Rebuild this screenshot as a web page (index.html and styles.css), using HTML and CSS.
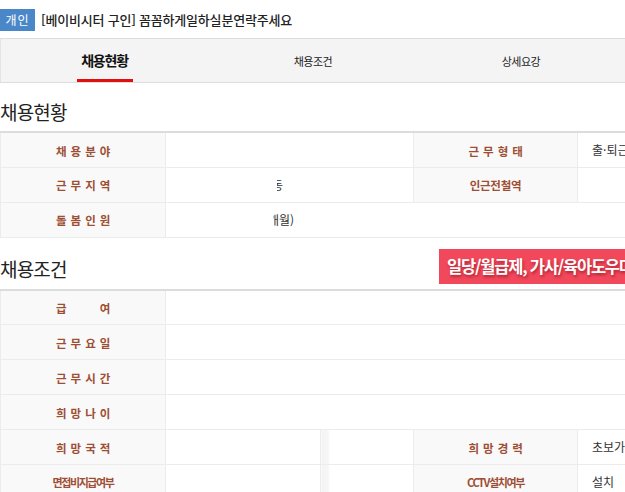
FILE: index.html
```html
<!DOCTYPE html>
<html lang="ko">
<head>
<meta charset="utf-8">
<link rel="stylesheet" href="styles.css">
</head>
<body>
<div class="page">
  <div class="title-row">
    <span class="badge">개인</span>
    <h1 class="title">[베이비시터 구인] 꼼꼼하게일하실분연락주세요</h1>
  </div>
  <nav class="tabs">
    <a class="tab active"><span>채용현황</span></a>
    <a class="tab"><span>채용조건</span></a>
    <a class="tab"><span>상세요강</span></a>
  </nav>

  <h2 class="sec-title">채용현황</h2>
  <table class="info">
    <colgroup><col class="c1"><col class="c2"><col class="c3"><col class="c4"><col class="c5"></colgroup>
    <tr>
      <th><span class="j">채 용 분 야</span></th>
      <td colspan="2"></td>
      <th><span class="j">근 무 형 태</span></th>
      <td>출·퇴근</td>
    </tr>
    <tr>
      <th><span class="j">근 무 지 역</span></th>
      <td colspan="2" class="pad-a"><span class="clip clip-a"><span>동</span></span></td>
      <th>인근전철역</th>
      <td></td>
    </tr>
    <tr>
      <th><span class="j">돌 봄 인 원</span></th>
      <td colspan="4" class="pad-b"><span class="clip clip-b"><span>개월)</span></span></td>
    </tr>
  </table>

  <div class="sec-head">
    <h2 class="sec-title">채용조건</h2>
    <div class="banner">일당/월급제, 가사/육아도우미</div>
  </div>
  <table class="info">
    <colgroup><col class="c1"><col class="c2"><col class="c3"><col class="c4"><col class="c5"></colgroup>
    <tr>
      <th><span class="j">급 여</span></th>
      <td colspan="4"></td>
    </tr>
    <tr>
      <th><span class="j">근 무 요 일</span></th>
      <td colspan="4"></td>
    </tr>
    <tr>
      <th><span class="j">근 무 시 간</span></th>
      <td colspan="4"></td>
    </tr>
    <tr>
      <th><span class="j">희 망 나 이</span></th>
      <td colspan="4"></td>
    </tr>
    <tr>
      <th><span class="j">희 망 국 적</span></th>
      <td></td>
      <td class="shade"></td>
      <th><span class="j">희 망 경 력</span></th>
      <td>초보가능</td>
    </tr>
    <tr>
      <th class="tight">면접비지급여부</th>
      <td></td>
      <td class="shade"></td>
      <th class="tight">CCTV설치여부</th>
      <td>설치</td>
    </tr>
  </table>
</div>
</body>
</html>
```

FILE: styles.css
```css
html, body {
  margin: 0;
  padding: 0;
  background: #fff;
  overflow: hidden;
}
body {
  font-family: "Noto Sans CJK KR", "Noto Sans", sans-serif;
  color: #333;
}
.page {
  width: 760px;
}
.title-row {
  display: flex;
  align-items: center;
  gap: 6px;
  height: 38px;
}
.badge {
  display: flex;
  align-items: center;
  justify-content: center;
  width: 35px;
  height: 22px;
  margin-top: 1px;
  background: #4a87c9;
  color: #fff;
  font-size: 12px;
  letter-spacing: 1px;
}
.title {
  margin: 0;
  font-size: 13px;
  font-weight: 500;
  letter-spacing: -0.2px;
  color: #222;
}
.tabs {
  display: flex;
  width: 624px;
  height: 43px;
  background: #f4f4f4;
  border-top: 1px solid #ddd;
  border-bottom: 1px solid #ddd;
  border-left: 1px solid #e4e4e4;
}
.tab {
  flex: 1;
  display: flex;
  justify-content: center;
  align-items: stretch;
  font-size: 11px;
  letter-spacing: -0.5px;
  color: #222;
}
.tab span {
  display: flex;
  align-items: center;
  padding: 0 4px;
  margin-top: 1px;
}
.tab.active span {
  font-size: 14px;
  font-weight: 700;
  letter-spacing: -1.2px;
  color: #111;
  border-bottom: 3px solid #e01010;
  padding: 0 5px 0 4px;
}
.sec-title {
  margin: 0;
  font-size: 19px;
  font-weight: 400;
  letter-spacing: -0.8px;
  color: #222;
  line-height: 58px;
  height: 48px;
}
.sec-head {
  display: flex;
  align-items: flex-start;
  height: 51px;
}
.sec-head .sec-title {
  flex-shrink: 0;
  width: 439px;
  line-height: 62px;
  height: 51px;
}
.banner {
  flex-shrink: 0;
  margin-top: 11px;
  width: 320px;
  height: 35px;
  box-sizing: border-box;
  padding-left: 8px;
  background: #f2485b;
  color: #fff;
  font-size: 16.5px;
  font-weight: 700;
  letter-spacing: -1.2px;
  line-height: 35px;
  text-shadow: 1px 2px 3px rgba(120, 0, 10, 0.55);
  white-space: nowrap;
}
.info {
  border-collapse: collapse;
  table-layout: fixed;
  width: 740px;
  border-top: 2px solid #dcdcdc;
}
.c1 { width: 165px; }
.c2 { width: 155px; }
.c3 { width: 93px; }
.c4 { width: 164px; }
.c5 { width: 163px; }
.info tr { height: 35px; }
.info th, .info td {
  border: 1px solid #ececec;
  padding: 0;
  line-height: 16px;
}
.info th {
  background: #f9f9f9;
  color: #9e4e34;
  font-size: 11.5px;
  font-weight: 700;
  text-align: center;
  letter-spacing: -0.3px;
}
.info th.tight {
  letter-spacing: -1.4px;
  font-size: 11px;
}
.j {
  display: inline-block;
  width: 54px;
  text-align: justify;
  text-align-last: justify;
  vertical-align: middle;
}
.info td {
  font-size: 12px;
  color: #333;
  padding-left: 14px;
  white-space: nowrap;
  overflow: hidden;
}
.info td.pad-a { padding-left: 111px; }
.info td.pad-b { padding-left: 107px; }
.info td.shade {
  background: linear-gradient(to right, #f4f4f4 0, #f6f6f6 7px, #fff 8px);
  padding: 0;
}
.clip {
  display: inline-block;
  overflow: hidden;
  vertical-align: middle;
  height: 16px;
  line-height: 16px;
}
.clip span {
  display: inline-block;
}
.clip-a { width: 7px; }
.clip-a span { margin-left: -5px; }
.clip-b { width: 32px; }
.clip-b span { margin-left: -5px; }
```
